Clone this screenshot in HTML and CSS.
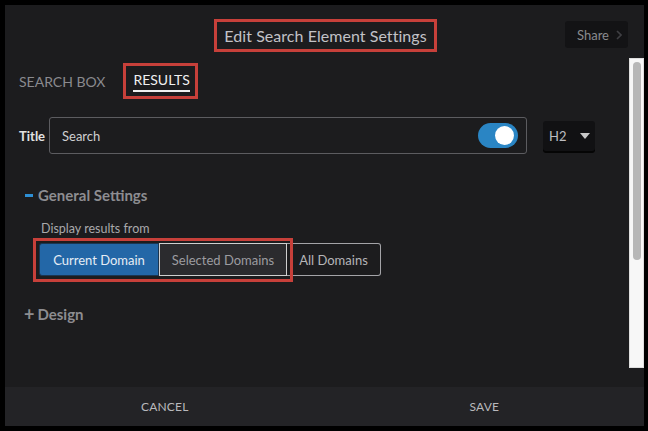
FILE: index.html
```html
<!DOCTYPE html>
<html>
<head>
<meta charset="utf-8">
<link rel="stylesheet" href="styles.css">
</head>
<body>
<div class="dialog">
  <div class="header">
    <div class="title annot">Edit Search Element Settings</div>
    <button class="share">Share <svg class="chev" width="6" height="10" viewBox="0 0 6 10"><path d="M1 1l4 4-4 4" fill="none" stroke="#3f3f43" stroke-width="1.6"/></svg></button>
  </div>
  <div class="body">
    <div class="content">
      <div class="tabs">
        <span class="tab">SEARCH BOX</span>
        <span class="tab-active annot"><span class="tab-label">RESULTS</span></span>
      </div>
      <div class="title-row">
        <span class="field-label">Title</span>
        <div class="input">
          <span class="input-text">Search</span>
          <span class="toggle"><span class="knob"></span></span>
        </div>
        <div class="select">
          <span>H2</span>
          <svg class="caret" width="10" height="6" viewBox="0 0 10 6"><path d="M0 0h10L5 6z" fill="#c8c8c8"/></svg>
        </div>
      </div>
      <div class="section">
        <span class="minus"></span><span class="section-title">General Settings</span>
      </div>
      <div class="sub">
        <div class="sub-label">Display results from</div>
        <div class="btn-group">
          <span class="seg seg-current">Current Domain</span>
          <span class="seg seg-selected">Selected Domains</span>
          <span class="seg seg-all">All Domains</span>
          <span class="group-annot"></span>
        </div>
      </div>
      <div class="section section-design">
        <span class="plus">+</span><span class="section-title">Design</span>
      </div>
    </div>
    <div class="scroll-track"><div class="scroll-thumb"></div></div>
  </div>
  <div class="footer">
    <span class="foot-btn">CANCEL</span>
    <span class="foot-btn">SAVE</span>
  </div>
</div>
</body>
</html>
```

FILE: styles.css
```css
* { box-sizing: border-box; }
html, body { margin: 0; padding: 0; background: #000; }
body { font-family: Lato, "Open Sans", sans-serif; width: 648px; height: 431px; overflow: hidden; padding: 5px 4px 5px 5px; }

.dialog {
  width: 639px;
  height: 421px;
  background: #1c1c1e;
  display: flex;
  flex-direction: column;
}

.annot { border: 3px solid #c7403a; }

.header {
  height: 54px;
  position: relative;
  display: flex;
  align-items: flex-start;
  justify-content: center;
}
.title {
  margin-top: 14px;
  margin-left: 2px;
  height: 33px;
  padding: 0 7px;
  display: flex;
  align-items: center;
  font-size: 16px;
  color: #c2c2c7;
  letter-spacing: 0.05px;
}
.share {
  position: absolute;
  right: 16px;
  top: 16px;
  width: 63px;
  height: 27px;
  background: #131315;
  border: none;
  border-radius: 3px;
  font-family: Lato, sans-serif;
  font-size: 13px;
  color: #8a8a8e;
  padding: 0 0 0 12px;
  text-align: left;
  display: flex;
  align-items: center;
}
.share .chev { margin-left: 7px; }

.body {
  flex: 1;
  display: flex;
}
.content { flex: 1; padding-left: 14px; }

.tabs {
  margin-top: 4px;
  height: 36px;
  display: flex;
  align-items: center;
}
.tab { font-size: 14px; color: #8a8a8e; }
.tab-active {
  margin-left: 18px;
  height: 36px;
  padding: 0 5px 0 7px;
  display: flex;
  align-items: center;
}
.tab-label {
  font-size: 14px;
  color: #f0f0f0;
  padding-top: 3px;
  border-bottom: 2px solid #f0f0f0;
  line-height: 14px;
  padding-bottom: 3px;
}

.title-row {
  margin-top: 18px;
  display: flex;
  align-items: center;
}
.field-label { font-size: 13px; font-weight: 700; color: #e2e2e2; width: 30px; }
.input {
  width: 478px;
  height: 37px;
  border: 1px solid #5c5c60;
  border-radius: 3px;
  display: flex;
  align-items: center;
  justify-content: space-between;
  padding: 0 8px 0 12px;
}
.input-text { font-size: 13px; color: #cfcfd2; }
.toggle {
  width: 40px;
  height: 25px;
  border-radius: 13px;
  background: #2a85c4;
  position: relative;
}
.knob {
  position: absolute;
  right: 4px;
  top: 3px;
  width: 19px;
  height: 19px;
  border-radius: 50%;
  background: #fff;
}
.select {
  margin-left: 16px;
  width: 52px;
  height: 30px;
  background: #111113;
  border-radius: 3px;
  box-shadow: 0 2px 0 #050505;
  display: flex;
  align-items: center;
  justify-content: space-between;
  padding: 0 5px 0 6px;
  font-size: 13px;
  color: #bdbdc0;
}
.caret { margin-top: 1px; }

.section {
  margin-top: 31px;
  display: flex;
  align-items: center;
  height: 20px;
}
.minus {
  display: inline-block;
  width: 8px;
  height: 3px;
  background: #2d8fd5;
  margin: 0 5px 0 6px;
}
.section-title { font-size: 15px; font-weight: 700; color: #8d8d91; }
.plus { font-size: 18px; font-weight: 700; color: #8d8d91; margin: 0 3px 0 5px; line-height: 20px; }

.sub { padding-left: 22px; margin-top: 16px; }
.sub-label { font-size: 12.5px; color: #a9a9ac; line-height: 16px; }
.btn-group {
  margin-top: 6px;
  margin-left: -2px;
  display: flex;
  height: 33px;
  position: relative;
  width: max-content;
}
.seg {
  display: flex;
  align-items: center;
  justify-content: center;
  font-size: 13px;
  height: 33px;
}
.seg-current {
  width: 120px;
  background: #2367a7;
  color: #e6edf5;
  border: 1px solid #1a3550;
  border-radius: 3px 0 0 3px;
}
.seg-selected {
  width: 128px;
  background: #2b2b2e;
  color: #9c9ca0;
  border: 1px solid #cfcfcf;
}
.seg-all {
  width: 94px;
  background: #1c1c1e;
  color: #b5b5b8;
  border: 1px solid #a4a4a8;
  border-left: none;
  border-radius: 0 3px 3px 0;
}
.group-annot {
  position: absolute;
  left: -6px;
  top: -5px;
  width: 260px;
  height: 44px;
  border: 3px solid #c7403a;
}

.section-design { margin-top: 28px; }

.scroll-track {
  margin-top: -1px;
  width: 15px;
  height: 310px;
  background: #f7f7f7;
  border: 1px solid #dedede;
  padding: 3px 0 0 3px;
}
.scroll-thumb {
  width: 8px;
  height: 198px;
  background: #b7b7b7;
  border-radius: 4px;
}

.footer {
  height: 39px;
  background: #232326;
  display: flex;
}
.foot-btn {
  flex: 1;
  display: flex;
  align-items: center;
  justify-content: center;
  font-size: 12px;
  color: #b9b9bc;
  letter-spacing: 0.2px;
}
```
